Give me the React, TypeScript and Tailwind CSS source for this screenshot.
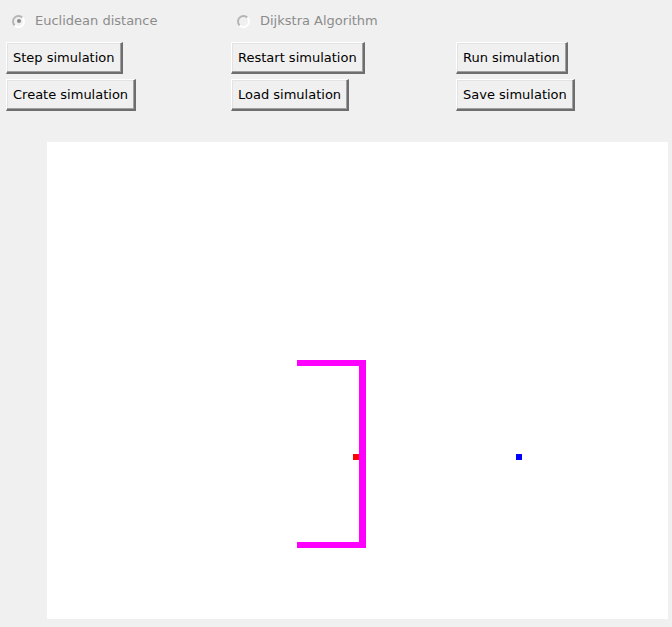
const Radio = ({ label, checked }: { label: string; checked?: boolean }) => (
  <div className="flex items-center h-[20px] pl-[6px] text-[13px] text-[#8c8c8c]">
    <span className="relative w-[13px] h-[13px] rounded-full border-2 border-t-[#b4b4b4] border-l-[#b4b4b4] border-b-white border-r-white bg-[#f0f0f0] mr-[10px]">
      {checked && (
        <span className="absolute left-[2.5px] top-[2.5px] w-[4px] h-[4px] rounded-full bg-[#8a8a8a]" />
      )}
    </span>
    <span>{label}</span>
  </div>
)

const TkButton = ({ label }: { label: string }) => (
  <button className="h-[32px] px-[6px] bg-[#f0f0f0] text-[13px] text-black leading-none border-t border-l border-t-white border-l-white border-b-2 border-r-2 border-b-[#6e6e6e] border-r-[#6e6e6e] shadow-[inset_-1px_-1px_0_#a0a0a0,inset_1px_1px_0_#e3e3e3]">
    {label}
  </button>
)

export default function App() {
  return (
    <div
      className="w-[672px] h-[627px] bg-[#f0f0f0] overflow-hidden"
      style={{ fontFamily: '"DejaVu Sans", Verdana, sans-serif' }}
    >
      <div className="grid grid-cols-[225px_225px_222px] pt-[11px] pl-[6px]">
        <Radio label="Euclidean distance" checked />
        <Radio label="Dijkstra Algorithm" />
        <div />
      </div>
      <div className="grid grid-cols-[225px_225px_222px] gap-y-[5px] pt-[11px] pl-[6px]">
        <div><TkButton label="Step simulation" /></div>
        <div><TkButton label="Restart simulation" /></div>
        <div><TkButton label="Run simulation" /></div>
        <div><TkButton label="Create simulation" /></div>
        <div><TkButton label="Load simulation" /></div>
        <div><TkButton label="Save simulation" /></div>
      </div>
      <div className="mt-[31px] ml-[47px] w-[621px] h-[477px] bg-white">
        <svg width="621" height="477" viewBox="0 0 621 477">
          <rect x="250" y="218" width="69" height="6" fill="#ff00ff" />
          <rect x="312" y="218" width="7" height="188" fill="#ff00ff" />
          <rect x="250" y="400" width="69" height="6" fill="#ff00ff" />
          <rect x="306" y="312" width="6" height="6" fill="#ff0000" />
          <rect x="469" y="312" width="6" height="6" fill="#0000ff" />
        </svg>
      </div>
    </div>
  )
}
